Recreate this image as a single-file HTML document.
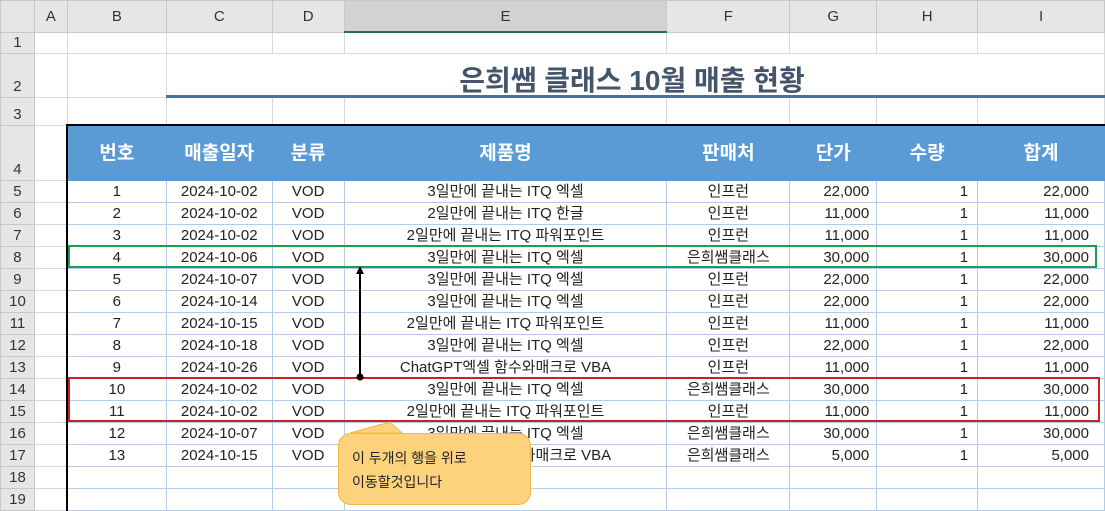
<!DOCTYPE html>
<html><head><meta charset="utf-8"><style>
html,body{margin:0;width:1105px;height:511px;overflow:hidden}
body{background:#fff;font-family:"Liberation Sans","Noto Sans CJK KR",sans-serif;position:relative}
table{border-collapse:collapse;table-layout:fixed;position:absolute;left:0;top:0}
td{border:1px solid #d9d9d9;padding:0;font-size:15px;color:#222;text-align:center;white-space:nowrap;overflow:hidden;line-height:1}
tr.h td{background:#e6e6e6;color:#333;font-size:15px;border-color:#c8c8c8}
td.rh{background:#e6e6e6;color:#333;font-size:15px;border-color:#c8c8c8;vertical-align:bottom;padding-bottom:3px}
tr.d td.t{border-color:#b4cde6}
td.r{text-align:right;padding-right:7px}
td.r2{text-align:right;padding-right:9px}
td.r3{text-align:right;padding-right:15px}
tr.hd td.t{background:#5b9bd5;color:#fff;font-weight:bold;font-size:19px;border-color:#5b9bd5}
</style></head><body>
<table>
<colgroup><col style="width:34px"><col style="width:33px"><col style="width:99px"><col style="width:106px"><col style="width:72px"><col style="width:323px"><col style="width:123px"><col style="width:87px"><col style="width:101px"><col style="width:127px"></colgroup>
<tr class="h" style="height:32px"><td></td><td>A</td><td>B</td><td>C</td><td>D</td><td style="background:#d2d2d2">E</td><td>F</td><td>G</td><td>H</td><td>I</td></tr>
<tr style="height:21px"><td class="rh">1</td><td></td><td></td><td></td><td></td><td></td><td></td><td></td><td></td><td></td></tr>
<tr style="height:44px"><td class="rh">2</td><td></td><td></td><td style="border-right:none"></td><td style="border:none"></td><td style="border:none"></td><td style="border:none"></td><td style="border:none"></td><td style="border:none"></td><td style="border-left:none"></td></tr>
<tr style="height:28px"><td class="rh">3</td><td></td><td></td><td></td><td></td><td></td><td></td><td></td><td></td><td></td></tr>
<tr class="hd" style="height:55px"><td class="rh">4</td><td></td><td class="t">번호</td><td class="t">매출일자</td><td class="t">분류</td><td class="t">제품명</td><td class="t">판매처</td><td class="t">단가</td><td class="t">수량</td><td class="t">합계</td></tr>
<tr class="d" style="height:22px"><td class="rh">5</td><td></td><td class="t">1</td><td class="t">2024-10-02</td><td class="t">VOD</td><td class="t">3일만에 끝내는 ITQ 엑셀</td><td class="t">인프런</td><td class="t r">22,000</td><td class="t r2">1</td><td class="t r3">22,000</td></tr>
<tr class="d" style="height:22px"><td class="rh">6</td><td></td><td class="t">2</td><td class="t">2024-10-02</td><td class="t">VOD</td><td class="t">2일만에 끝내는 ITQ 한글</td><td class="t">인프런</td><td class="t r">11,000</td><td class="t r2">1</td><td class="t r3">11,000</td></tr>
<tr class="d" style="height:22px"><td class="rh">7</td><td></td><td class="t">3</td><td class="t">2024-10-02</td><td class="t">VOD</td><td class="t">2일만에 끝내는 ITQ 파워포인트</td><td class="t">인프런</td><td class="t r">11,000</td><td class="t r2">1</td><td class="t r3">11,000</td></tr>
<tr class="d" style="height:22px"><td class="rh">8</td><td></td><td class="t">4</td><td class="t">2024-10-06</td><td class="t">VOD</td><td class="t">3일만에 끝내는 ITQ 엑셀</td><td class="t">은희쌤클래스</td><td class="t r">30,000</td><td class="t r2">1</td><td class="t r3">30,000</td></tr>
<tr class="d" style="height:22px"><td class="rh">9</td><td></td><td class="t">5</td><td class="t">2024-10-07</td><td class="t">VOD</td><td class="t">3일만에 끝내는 ITQ 엑셀</td><td class="t">인프런</td><td class="t r">22,000</td><td class="t r2">1</td><td class="t r3">22,000</td></tr>
<tr class="d" style="height:22px"><td class="rh">10</td><td></td><td class="t">6</td><td class="t">2024-10-14</td><td class="t">VOD</td><td class="t">3일만에 끝내는 ITQ 엑셀</td><td class="t">인프런</td><td class="t r">22,000</td><td class="t r2">1</td><td class="t r3">22,000</td></tr>
<tr class="d" style="height:22px"><td class="rh">11</td><td></td><td class="t">7</td><td class="t">2024-10-15</td><td class="t">VOD</td><td class="t">2일만에 끝내는 ITQ 파워포인트</td><td class="t">인프런</td><td class="t r">11,000</td><td class="t r2">1</td><td class="t r3">11,000</td></tr>
<tr class="d" style="height:22px"><td class="rh">12</td><td></td><td class="t">8</td><td class="t">2024-10-18</td><td class="t">VOD</td><td class="t">3일만에 끝내는 ITQ 엑셀</td><td class="t">인프런</td><td class="t r">22,000</td><td class="t r2">1</td><td class="t r3">22,000</td></tr>
<tr class="d" style="height:22px"><td class="rh">13</td><td></td><td class="t">9</td><td class="t">2024-10-26</td><td class="t">VOD</td><td class="t">ChatGPT엑셀 함수와매크로 VBA</td><td class="t">인프런</td><td class="t r">11,000</td><td class="t r2">1</td><td class="t r3">11,000</td></tr>
<tr class="d" style="height:22px"><td class="rh">14</td><td></td><td class="t">10</td><td class="t">2024-10-02</td><td class="t">VOD</td><td class="t">3일만에 끝내는 ITQ 엑셀</td><td class="t">은희쌤클래스</td><td class="t r">30,000</td><td class="t r2">1</td><td class="t r3">30,000</td></tr>
<tr class="d" style="height:22px"><td class="rh">15</td><td></td><td class="t">11</td><td class="t">2024-10-02</td><td class="t">VOD</td><td class="t">2일만에 끝내는 ITQ 파워포인트</td><td class="t">인프런</td><td class="t r">11,000</td><td class="t r2">1</td><td class="t r3">11,000</td></tr>
<tr class="d" style="height:22px"><td class="rh">16</td><td></td><td class="t">12</td><td class="t">2024-10-07</td><td class="t">VOD</td><td class="t">3일만에 끝내는 ITQ 엑셀</td><td class="t">은희쌤클래스</td><td class="t r">30,000</td><td class="t r2">1</td><td class="t r3">30,000</td></tr>
<tr class="d" style="height:22px"><td class="rh">17</td><td></td><td class="t">13</td><td class="t">2024-10-15</td><td class="t">VOD</td><td class="t">ChatGPT엑셀 함수와매크로 VBA</td><td class="t">은희쌤클래스</td><td class="t r">5,000</td><td class="t r2">1</td><td class="t r3">5,000</td></tr>
<tr class="d" style="height:22px"><td class="rh">18</td><td></td><td class="t"></td><td class="t"></td><td class="t"></td><td class="t"></td><td class="t"></td><td class="t"></td><td class="t"></td><td class="t"></td></tr>
<tr class="d" style="height:22px"><td class="rh">19</td><td></td><td class="t"></td><td class="t"></td><td class="t"></td><td class="t"></td><td class="t"></td><td class="t"></td><td class="t"></td><td class="t"></td></tr>
</table>
<div style="position:absolute;left:344px;top:31px;width:323px;height:2px;background:#217346"></div>
<div style="position:absolute;left:166px;top:59px;width:932px;text-align:center;font-size:28px;font-weight:bold;color:#44546a">은희쌤 클래스 10월 매출 현황</div>
<div style="position:absolute;left:166px;top:95px;width:939px;height:3px;background:#4a6fa8"></div>
<div style="position:absolute;left:66px;top:124px;width:1045px;height:400px;border:2px solid #000;box-sizing:border-box"></div>
<div style="position:absolute;left:68px;top:245px;width:1029px;height:23px;border:2px solid #1e9c50;box-sizing:border-box"></div>
<div style="position:absolute;left:68px;top:377px;width:1032px;height:45px;border:2px solid #cc2028;box-sizing:border-box"></div>
<svg style="position:absolute;left:0;top:0" width="1105" height="511">
<line x1="360" y1="272" x2="360" y2="377" stroke="#000" stroke-width="2"/>
<path d="M356 274 L360 266 L364 274 Z" fill="#000"/>
<circle cx="360" cy="377" r="3.5" fill="#000"/>
<path d="M350 433 L390 422 L402 433 Z" fill="#fdd27c" stroke="#f2b84a"/>
<rect x="338.5" y="433.5" width="192" height="71" rx="12" fill="#fdd27c" stroke="#f2b84a"/>
<rect x="352" y="434" width="52" height="2" fill="#fdd27c"/>
</svg>
<div style="position:absolute;left:352px;top:446px;font-size:14px;color:#222;line-height:24px">이 두개의 행을 위로<br>이동할것입니다</div>
</body></html>
